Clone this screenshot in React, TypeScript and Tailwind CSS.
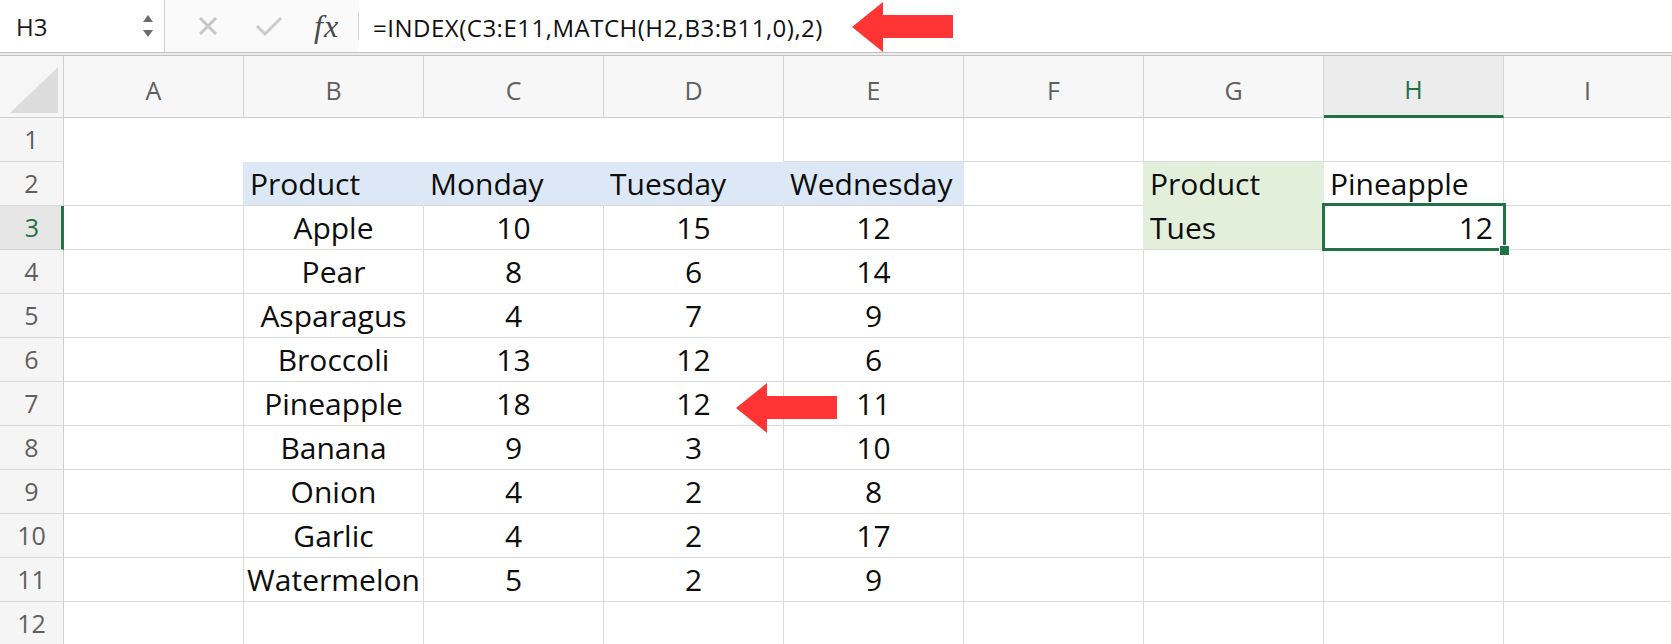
const GREEN = "#217346";

const data: string[][] = [
  ["", "", "", "", "", "", "", "", ""],
  ["", "Product", "Monday", "Tuesday", "Wednesday", "", "Product", "Pineapple", ""],
  ["", "Apple", "10", "15", "12", "", "Tues", "12", ""],
  ["", "Pear", "8", "6", "14", "", "", "", ""],
  ["", "Asparagus", "4", "7", "9", "", "", "", ""],
  ["", "Broccoli", "13", "12", "6", "", "", "", ""],
  ["", "Pineapple", "18", "12", "11", "", "", "", ""],
  ["", "Banana", "9", "3", "10", "", "", "", ""],
  ["", "Onion", "4", "2", "8", "", "", "", ""],
  ["", "Garlic", "4", "2", "17", "", "", "", ""],
  ["", "Watermelon", "5", "2", "9", "", "", "", ""],
  ["", "", "", "", "", "", "", "", ""],
];

const cols = ["A", "B", "C", "D", "E", "F", "G", "H", "I"];

function cellClass(r: number, c: number) {
  // r is the 1-based row, c the 0-based column (A = 0)
  const blue = r === 2 && c >= 1 && c <= 4;
  const green = (r === 2 || r === 3) && c === 6;
  let bg = "bg-white";
  let right = "border-r-[#dadada]";
  let bottom = "border-b-[#dadada]";
  if (blue) {
    bg = "bg-[#dde8f6]";
    right = "border-r-[#dde8f6]";
  }
  if (green) {
    bg = "bg-[#e2efda]";
    right = "border-r-[#e2efda]";
    if (r === 2) bottom = "border-b-[#e2efda]";
  }
  if (r === 1 && c <= 2) right = "border-r-white";
  if (r === 1 && c <= 3) bottom = "border-b-white";
  if (r === 2 && c === 0) right = "border-r-[#dde8f6]";
  if ((r === 2 || r === 3) && c === 5) right = "border-r-[#e2efda]";

  let align = "justify-center";
  if (r === 2 && c >= 1) align = "justify-start pl-[6px]";
  if (r === 3 && c === 6) align = "justify-start pl-[6px]";
  if (r === 3 && c === 7) align = "justify-end pr-[10px]";

  return `relative flex items-center border-r border-b ${bg} ${right} ${bottom} ${align}`;
}

function NameBox() {
  return (
    <div className="flex h-full w-[165px] items-center justify-between border-r border-[#cfcfcf] bg-white pl-[16px] pr-[10px]">
      <span className="pt-[2px] text-[24px] text-[#1a1a1a]">H3</span>
      <svg width="12" height="34" viewBox="0 0 12 34">
        <polygon points="6,6 11,13 1,13" fill="#6b6b6b" />
        <polygon points="1,21 11,21 6,28" fill="#6b6b6b" />
      </svg>
    </div>
  );
}

function FormulaBar() {
  return (
    <div className="flex h-[52px] items-center bg-[#fafafa]">
      <NameBox />
      <div className="flex h-full items-center pl-[32px]">
        <svg width="22" height="22" viewBox="0 0 22 22">
          <path d="M3 3 L19 19 M19 3 L3 19" stroke="#c6c6c6" strokeWidth="3" />
        </svg>
        <svg className="ml-[36px]" width="28" height="22" viewBox="0 0 28 22">
          <path d="M2 11 L10 19 L26 3" stroke="#cbcbcb" strokeWidth="3" fill="none" />
        </svg>
        <span className="ml-[31px] font-['Liberation_Serif',serif] text-[32px] italic leading-none tracking-[1px] text-[#4a4a4a]">
          fx
        </span>
        <div className="ml-[19px] h-[27px] w-px bg-[#d4d4d4]" />
      </div>
      <div className="flex h-full flex-1 items-center bg-white pl-[14px] pt-[3px] text-[24px] tracking-[0.5px] text-[#111]">
        =INDEX(C3:E11,MATCH(H2,B3:B11,0),2)
      </div>
    </div>
  );
}

function Arrow({ className }: { className: string }) {
  return (
    <svg className={`pointer-events-none absolute z-20 ${className}`} width="106" height="54" viewBox="0 0 106 54">
      <polygon points="2,27 33,2 33,15 103,15 103,38 33,38 33,52" fill="#ff3434" />
    </svg>
  );
}

export default function App() {
  return (
    <div className="relative h-[644px] w-[1672px] overflow-hidden bg-white font-['Open_Sans',sans-serif]">
      <FormulaBar />
      <div className="h-[4px] border-y border-[#c2c2c2] bg-[#ececec]" />

      <div className="grid grid-cols-[64px_repeat(8,180px)_1fr] grid-rows-[62px_repeat(12,44px)]">
        <div className="relative border-r border-b border-[#cfcfcf] bg-[#f6f6f6]">
          <svg className="absolute left-[10px] top-[11px]" width="48" height="46" viewBox="0 0 48 46">
            <polygon points="0,46 48,0 48,46" fill="#dcdcdc" />
          </svg>
        </div>
        {cols.map((c) => (
          <div
            key={c}
            className={
              c === "H"
                ? "flex items-center justify-center border-r border-r-[#d4d4d4] border-b-[3px] border-b-[#217346] bg-[#ececec] pt-[9px] text-[25px] text-[#217346]"
                : "flex items-center justify-center border-r border-b border-r-[#d4d4d4] border-b-[#cfcfcf] bg-[#f7f7f7] pt-[8px] text-[25px] text-[#5f5f5f]"
            }
          >
            {c}
          </div>
        ))}

        {data.map((row, i) => {
          const r = i + 1;
          return [
            <div
              key={`h${r}`}
              className={
                r === 3
                  ? "flex items-center justify-center border-r-[3px] border-b border-r-[#217346] border-b-[#d4d4d4] bg-[#e6e6e6] pl-[3px] text-[25px] text-[#217346]"
                  : "flex items-center justify-center border-r border-b border-r-[#cfcfcf] border-b-[#d9d9d9] bg-[#f5f5f5] text-[25px] text-[#5f5f5f]"
              }
            >
              {r}
            </div>,
            ...row.map((v, c) => (
              <div key={`${r}-${c}`} className={`${cellClass(r, c)} ${r === 3 && c === 7 ? "z-10" : ""}`}>
                <span className="text-[30px] leading-none text-[#0d0d0d]">{v}</span>
                {r === 3 && c === 7 && (
                  <>
                    <div className="pointer-events-none absolute -top-[3px] -left-[2px] -right-[3px] -bottom-[2px] border-[3px] border-[#217346]" />
                    <div className="absolute -right-[7px] -bottom-[7px] h-[11px] w-[11px] border border-white bg-[#217346]" />
                  </>
                )}
              </div>
            )),
          ];
        })}
      </div>

      <Arrow className="left-[850px] top-0" />
      <Arrow className="left-[734px] top-[381px]" />
    </div>
  );
}
